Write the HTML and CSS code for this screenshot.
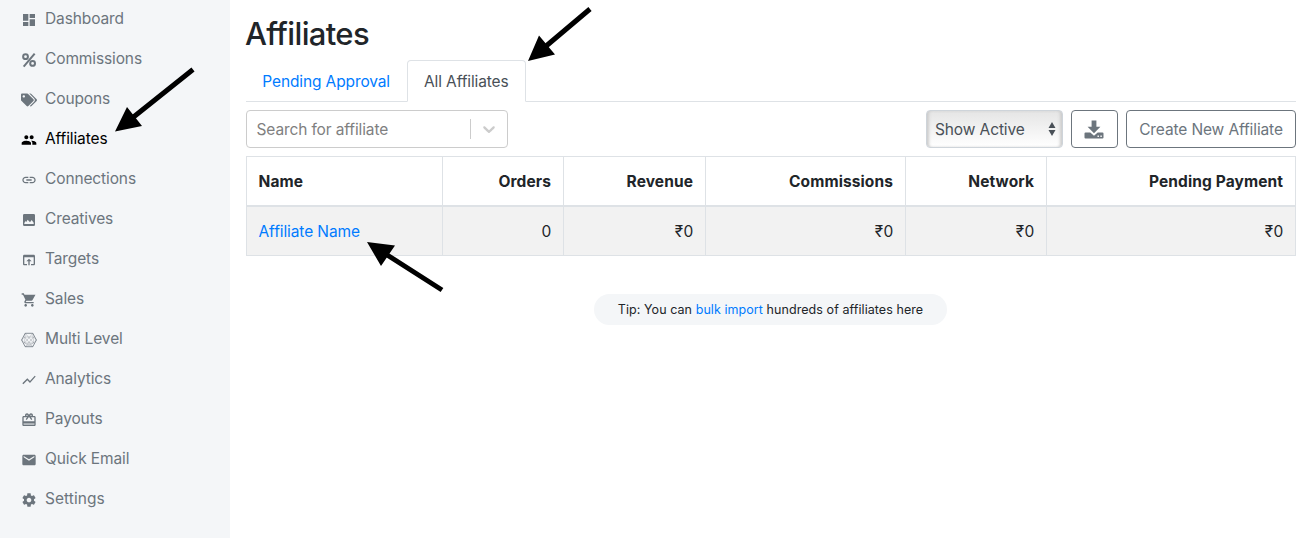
FILE: index.html
```
<!DOCTYPE html>
<html lang="en">
<head>
<meta charset="utf-8">
<title>Affiliates</title>
<link rel="stylesheet" href="styles.css">
</head>
<body>
<div class="app">
  <nav class="sidebar">
    <a class="item"><svg class="icon" viewBox="0 0 24 24"><path d="M3 13h8V3H3v10zm0 8h8v-6H3v6zm10 0h8V11h-8v10zm0-18v6h8V3h-8z"/></svg><span>Dashboard</span></a>
    <a class="item"><svg class="icon" viewBox="0 0 24 24"><g fill="none" stroke="currentColor" stroke-width="3"><circle cx="6.800" cy="7" r="3.600"/><circle cx="17.400" cy="17.200" r="3.600"/><path d="M20.500 2.500L4 22"/></g></svg><span>Commissions</span></a>
    <a class="item"><svg class="icon" viewBox="0 0 640 512"><path d="M497.941 225.941L286.059 14.059A48 48 0 0 0 252.118 0H48C21.490 0 0 21.490 0 48v204.118a48 48 0 0 0 14.059 33.941l211.882 211.882c18.744 18.745 49.136 18.746 67.882 0l204.118-204.118c18.745-18.745 18.745-49.137 0-67.882zM112 160c-26.510 0-48-21.490-48-48s21.490-48 48-48 48 21.490 48 48-21.490 48-48 48zm513.941 133.823L421.823 497.941c-18.745 18.745-49.137 18.745-67.882 0l-.360-.360L527.640 323.522c16.999-16.999 26.360-39.600 26.360-63.640s-9.362-46.641-26.360-63.640L331.397 0h48.721a48 48 0 0 1 33.941 14.059l211.882 211.882c18.745 18.745 18.745 49.137 0 67.882z"/></svg><span>Coupons</span></a>
    <a class="item active"><svg class="icon" viewBox="0 0 24 24"><path d="M16 11c1.660 0 2.990-1.340 2.990-3S17.660 5 16 5s-3 1.340-3 3 1.340 3 3 3zm-8 0c1.660 0 2.990-1.340 2.990-3S9.660 5 8 5 5 6.340 5 8s1.340 3 3 3zm0 2c-2.330 0-7 1.170-7 3.500V19h14v-2.500c0-2.330-4.670-3.500-7-3.500zm8 0c-.29 0-.62.020-.970.050 1.160.840 1.970 1.970 1.970 3.450V19h6v-2.500c0-2.330-4.670-3.500-7-3.500z"/></svg><span>Affiliates</span></a>
    <a class="item"><svg class="icon" viewBox="0 0 24 24"><path d="M3.900 12c0-1.710 1.390-3.100 3.100-3.100h4V7H7c-2.760 0-5 2.240-5 5s2.240 5 5 5h4v-1.900H7c-1.710 0-3.100-1.390-3.100-3.100zM8 13h8v-2H8v2zm9-6h-4v1.900h4c1.710 0 3.100 1.390 3.100 3.100s-1.390 3.100-3.100 3.100h-4V17h4c2.760 0 5-2.240 5-5s-2.240-5-5-5z"/></svg><span>Connections</span></a>
    <a class="item"><svg class="icon" viewBox="0 0 24 24"><path d="M5 3h14a2 2 0 0 1 2 2v14a2 2 0 0 1-2 2H5a2 2 0 0 1-2-2V5a2 2 0 0 1 2-2zm0 15h14v-2l-3-4-2.500 3.500L10 11.500 8 15l-1-1.500L5 16.500z" fill-rule="evenodd"/></svg><span>Creatives</span></a>
    <a class="item"><svg class="icon" viewBox="0 0 24 24"><path d="M19 4H5c-1.110 0-2 .9-2 2v12c0 1.100.890 2 2 2h4v-2H5V8h14v10h-4v2h4c1.100 0 2-.9 2-2V6c0-1.100-.890-2-2-2zm-7 6l-4 4h3v6h2v-6h3l-4-4z"/></svg><span>Targets</span></a>
    <a class="item"><svg class="icon" viewBox="0 0 24 24"><path d="M7 18c-1.100 0-1.990.9-1.990 2S5.900 22 7 22s2-.9 2-2-.9-2-2-2zM1 2v2h2l3.600 7.590-1.350 2.450c-.16.280-.25.610-.25.960 0 1.100.9 2 2 2h12v-2H7.420c-.14 0-.25-.110-.25-.250l.030-.120.9-1.630h7.450c.75 0 1.410-.410 1.750-1.030L21.700 4H5.210l-.940-2H1zm16 16c-1.100 0-1.990.9-1.990 2s.890 2 1.990 2 2-.9 2-2-.9-2-2-2z"/></svg><span>Sales</span></a>
    <a class="item"><svg class="icon mesh" viewBox="0 0 16 16"><path class="rim" d="M.600 8L4.200 1.300h7.600L15.400 8l-3.600 6.700H4.200z"/><path d="M4.200 1.300l8.400 9.700M11.800 1.300L3.500 11M4.200 14.700L12.600 5M11.800 14.700L3.500 5M4.200 1.300L3.500 11l8.300 3.700M11.800 1.300l.8 9.700-8.400 3.700M.600 8l2.900-3h9.100l2.800 3-2.800 3H3.500z"/></svg><span>Multi Level</span></a>
    <a class="item"><svg class="icon" viewBox="0 0 24 24"><path d="M3.500 18.490l6-6.010 4 4L22 6.920l-1.410-1.410-7.090 7.970-4-4L2 16.990z"/></svg><span>Analytics</span></a>
    <a class="item"><svg class="icon" viewBox="0 0 24 24"><path d="M20 6h-2.180c.110-.310.180-.650.180-1 0-1.660-1.340-3-3-3-1.050 0-1.960.540-2.500 1.350l-.5.670-.5-.680C10.960 2.540 10.050 2 9 2 7.340 2 6 3.340 6 5c0 .350.070.690.180 1H4c-1.110 0-1.990.890-1.990 2L2 19c0 1.110.890 2 2 2h16c1.110 0 2-.890 2-2V8c0-1.110-.890-2-2-2zm-5-2c.55 0 1 .450 1 1s-.450 1-1 1-1-.450-1-1 .450-1 1-1zM9 4c.550 0 1 .450 1 1s-.450 1-1 1-1-.450-1-1 .450-1 1-1zm11 15H4v-2h16v2zm0-5H4V8h5.080L7 10.830 8.620 12 11 8.760l1-1.360 1 1.360L15.380 12 17 10.830 14.920 8H20v6z"/><path class="faint" d="M4 16h16v3H4z"/></svg><span>Payouts</span></a>
    <a class="item"><svg class="icon" viewBox="0 0 24 24"><path d="M20 4H4c-1.100 0-1.990.9-1.990 2L2 18c0 1.100.9 2 2 2h16c1.100 0 2-.9 2-2V6c0-1.100-.9-2-2-2zm0 4l-8 5-8-5V6l8 5 8-5v2z"/></svg><span>Quick Email</span></a>
    <a class="item"><svg class="icon" viewBox="0 0 24 24"><path d="M19.430 12.980c.040-.320.070-.640.070-.980s-.030-.660-.070-.980l2.110-1.650c.190-.150.240-.420.120-.640l-2-3.460c-.120-.220-.390-.300-.610-.220l-2.490 1c-.520-.400-1.080-.730-1.690-.980l-.380-2.650C14.460 2.180 14.250 2 14 2h-4c-.250 0-.460.180-.490.420l-.380 2.650c-.610.250-1.170.590-1.690.980l-2.490-1c-.230-.090-.490 0-.610.220l-2 3.460c-.130.220-.070.490.120.640l2.110 1.650c-.040.320-.070.650-.070.980s.030.660.070.980l-2.110 1.650c-.190.150-.240.420-.120.640l2 3.460c.120.220.390.300.610.220l2.490-1c.520.400 1.080.730 1.690.980l.380 2.650c.030.240.240.420.490.420h4c.250 0 .460-.180.490-.420l.380-2.650c.610-.250 1.170-.590 1.690-.980l2.490 1c.230.090.490 0 .610-.220l2-3.460c.120-.220.070-.490-.120-.640l-2.110-1.650zM12 15.500c-1.930 0-3.500-1.570-3.500-3.500s1.570-3.500 3.500-3.500 3.500 1.570 3.500 3.500-1.570 3.500-3.500 3.500z"/></svg><span class="settings">Settings</span></a>
  </nav>
  <main class="main">
    <h1>Affiliates</h1>
    <div class="tabs">
      <a class="tab">Pending Approval</a>
      <a class="tab current">All Affiliates</a>
    </div>
    <div class="toolbar">
      <div class="search">
        <span class="placeholder">Search for affiliate</span>
        <span class="divider"></span>
        <svg class="chevron" viewBox="0 0 20 20"><path d="M4.516 7.548c.436-.446 1.043-.481 1.576 0L10 11.295l3.908-3.747c.533-.481 1.141-.446 1.574 0 .436.445.408 1.197 0 1.615-.406.418-4.695 4.502-4.695 4.502a1.095 1.095 0 0 1-1.576 0S4.924 9.581 4.516 9.163s-.436-1.170 0-1.615z"/></svg>
      </div>
      <div class="select"><span>Show Active</span><svg class="updown" viewBox="0 0 8 14"><path d="M4 0l3.500 6h-7zM4 14L.500 8h7z"/></svg></div>
      <button class="btn download" aria-label="Download"><svg viewBox="0 0 20 19"><path d="M7.600.500h4.800v6.300h4L10 13.200 3.600 6.800h4z"/><path d="M1.500 12.500h4.800l3.700 3.200 3.700-3.200h4.800a1 1 0 0 1 1 1v4a1 1 0 0 1-1 1h-17a1 1 0 0 1-1-1v-4a1 1 0 0 1 1-1zM13.500 15.600v1.400h1.400v-1.400zm2.900 0v1.400h1.400v-1.400z" fill-rule="evenodd"/></svg></button>
      <button class="btn create"><span>Create New Affiliate</span></button>
    </div>
    <table>
      <colgroup><col class="c-name"><col class="c-orders"><col class="c-revenue"><col class="c-comm"><col class="c-network"><col class="c-pending"></colgroup>
      <thead><tr><th>Name</th><th>Orders</th><th>Revenue</th><th>Commissions</th><th>Network</th><th>Pending Payment</th></tr></thead>
      <tbody><tr><td><a>Affiliate Name</a></td><td>0</td><td>₹0</td><td>₹0</td><td>₹0</td><td>₹0</td></tr></tbody>
    </table>
    <p class="tip">Tip: You can <a>bulk import</a> hundreds of affiliates here</p>
  </main>
</div>
<svg class="arrows" viewBox="0 0 1311 538">
  <path class="shaft" d="M193 69.500L131 119M590 9l-48 40.500M442 290l-58-37"/>
  <path d="M115 131.500l12-24.500 15 19zM528 61l11-25.500L555 54.500zM367 242l28 3.500-14 20.500z"/>
</svg>
</body>
</html>
```
FILE: styles.css
```
* { box-sizing: border-box; }
body {
  margin: 0;
  font: 15.5px/24px Inter, "Liberation Sans", sans-serif;
  letter-spacing: -0.12px;
  color: #212529;
  background: #fff;
  overflow: hidden;
}
a { color: #007bff; text-decoration: none; }
.app { display: flex; height: 538px; }
.sidebar { width: 230px; flex: none; background: #f4f6f8; padding-left: 21px; }
.item { display: flex; align-items: center; height: 40px; gap: 8px; color: #6c757d; }
.item span, .placeholder, .select span, .create span { padding-top: 2px; }
.item .settings { letter-spacing: 0.05px; }
.sidebar .item:first-child { margin-top: -2px; }
.item.active { color: #000; }
.icon { width: 16px; height: 16px; flex: none; fill: currentColor; position: relative; top: 2px; }
.mesh { fill: none; stroke: currentColor; stroke-width: .3; }
.mesh .rim { stroke-width: .8; }
.faint { opacity: .4; }
.main { flex: 1; padding: 14px 15px 0 16px; }
h1 { margin: 0 0 0 -1px; font-size: 31px; line-height: 40px; font-weight: 550; letter-spacing: -0.65px; }
.tabs { display: flex; height: 42px; margin-top: 6px; border-bottom: 1px solid #dee2e6; }
.tab { height: 42px; padding: 8px 15.3px; border: 1px solid transparent; border-radius: 4px 4px 0 0; line-height: 25px; white-space: nowrap; }
.tab:first-child { width: 161px; }
.tab.current { width: 119px; padding-left: 16px; color: #495057; background: #fff; border-color: #dee2e6 #dee2e6 #fff; }
.toolbar { display: flex; height: 38px; margin-top: 8px; }
.search { display: flex; align-items: center; width: 262px; border: 1px solid #ccc; border-radius: 4px; padding-left: 9.5px; margin-right: auto; color: gray; }
.placeholder { flex: 1; }
.divider { width: 1px; height: 20px; background: #ccc; }
.chevron { width: 20px; height: 20px; margin: 0 8px; fill: #ccc; }
.select { display: flex; align-items: center; justify-content: space-between; width: 137px; padding: 0 6px 0 8px; border: 1px solid #ced4da; border-radius: 4px; color: #495057; background: linear-gradient(#e5e5e5, #fff); box-shadow: inset 3px 0 3px -1px #ccc, inset -3px 0 3px -1px #ccc; }
.updown { width: 8px; height: 14px; fill: #495057; }
.btn { display: flex; align-items: center; justify-content: center; margin-left: 8px; padding: 0; border: 1px solid #6c757d; border-radius: 4px; background: #fff; color: #6c757d; font: inherit; letter-spacing: inherit; }
.download { width: 47px; }
.download svg { width: 20px; height: 19px; margin-right: 1px; fill: #6c757d; }
.create { width: 170px; white-space: nowrap; }
table { width: 1050px; margin-top: 8px; table-layout: fixed; border-spacing: 0; border-right: 1px solid #dee2e6; }
.c-name { width: 196px; }
.c-orders { width: 121px; }
.c-revenue { width: 142px; }
.c-comm { width: 200px; }
.c-network { width: 141px; }
.c-pending { width: 249px; }
th, td { padding: 2px 12px 0; text-align: right; border-left: 1px solid #dee2e6; }
th:first-child, td:first-child { padding-left: 11.500px; text-align: left; }
th { height: 51px; border-top: 1px solid #dee2e6; border-bottom: 2px solid #dee2e6; font-weight: 650; letter-spacing: 0.1px; }
td { height: 49px; border-bottom: 1px solid #dee2e6; background: #f2f2f2; letter-spacing: -0.1px; }
td:not(:first-child) { padding-right: 11.5px; letter-spacing: 0.3px; }
.tip { width: 353px; height: 31px; margin: 38px 0 0 348px; border-radius: 16px; background: #f4f6f8; font-size: 12.5px; line-height: 31px; letter-spacing: 0.07px; text-align: center; white-space: nowrap; }
.arrows { position: absolute; left: 0; top: 0; width: 1311px; height: 538px; pointer-events: none; }
.shaft { fill: none; stroke: #000; stroke-width: 5; }
```
